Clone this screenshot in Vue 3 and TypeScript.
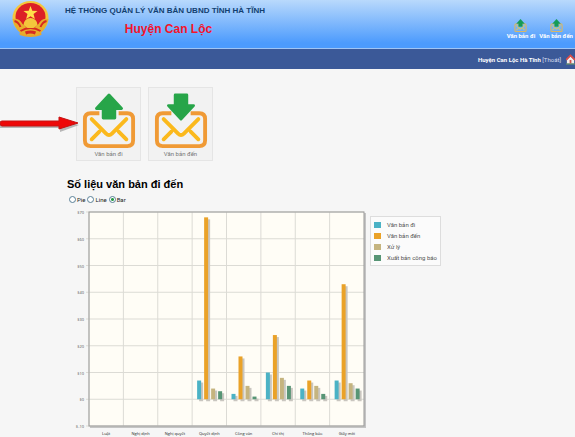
<script setup lang="ts">
import { ref } from 'vue'

interface Series {
  name: string
  color: string
}

interface Category {
  name: string
  values: number[]
}

const series: Series[] = [
  { name: 'Văn bản đi', color: '#4bb2c5' },
  { name: 'Văn bản đến', color: '#eaa228' },
  { name: 'Xử lý', color: '#c5b47f' },
  { name: 'Xuất bản công báo', color: '#579575' },
]

const categories: Category[] = [
  { name: 'Luật', values: [] },
  { name: 'Nghị định', values: [] },
  { name: 'Nghị quyết', values: [] },
  { name: 'Quyết định', values: [7, 68, 4, 3] },
  { name: 'Công văn', values: [2, 16, 5, 1] },
  { name: 'Chỉ thị', values: [10, 24, 8, 5] },
  { name: 'Thông báo', values: [4, 7, 5, 2] },
  { name: 'Giấy mời', values: [7, 43, 6, 4] },
]

const ticks: number[] = [70, 60, 50, 40, 30, 20, 10, 0, -10]
const chartTypes: string[] = ['Pie', 'Line', 'Bar']
const chartType = ref<string>('Bar')

const plot = { left: 22, top: 6, width: 275, height: 214 }
const columnWidth = plot.width / categories.length

const yOf = (value: number): number => plot.top + ((70 - value) / 80) * plot.height
const xOf = (column: number): number => plot.left + column * columnWidth
const barX = (column: number, index: number): number => xOf(column) + 5 + index * 7
const barHeight = (value: number): number => yOf(0) - yOf(value)

const shortcuts = [
  { label: 'Văn bản đi', down: false },
  { label: 'Văn bản đến', down: true },
]
</script>

<template>
  <div class="page">
    <header class="banner">
      <svg class="emblem" viewBox="1 0 36 36" aria-hidden="true">
        <path d="M9 27 L8 34 Q19 38 30 34 L29 27Z" fill="#e9a52c" />
        <ellipse cx="19" cy="17" rx="18" ry="17" fill="#f4c63c" />
        <ellipse cx="19" cy="16" rx="15" ry="14" fill="#dc1f26" />
        <path d="M19 5 L20.8 9.8 L26 10 L22 13 L23.4 18 L19 15.2 L14.6 18 L16 13 L12 10 L17.2 9.8Z" fill="#ffe04a" />
        <path d="M1 18 Q8 17 11 23 L16 27 L22 27 L27 23 Q30 17 37 18 Q34 31 25 34 H13 Q4 31 1 18Z" fill="#e8ae2c" />
        <path d="M3 20 Q7 21 9 26 M35 20 Q31 21 29 26 M9 30 Q19 24 29 30" fill="none" stroke="#d72b20" stroke-width="2" />
        <path d="M12 24 A7 7 0 0 1 26 24 L22 27 H16Z" fill="#f4c63c" />
        <path d="M14 32 Q19 30 24 32" fill="none" stroke="#d72b20" stroke-width="3" />
      </svg>
      <div class="titles">
        <p class="system">HỆ THỐNG QUẢN LÝ VĂN BẢN UBND TỈNH HÀ TĨNH</p>
        <h1>Huyện Can Lộc</h1>
      </div>
      <nav class="quick">
        <a v-for="item in shortcuts" :key="item.label" href="#">
          <svg viewBox="0 0 56 58" aria-hidden="true">
            <rect x="3" y="22" width="50" height="34" rx="6" fill="none" stroke="#d8b767" stroke-width="5" />
            <path d="M10 28 L25 43 Q28 46 31 43 L46 28 M10 50 L18 42 M46 50 L38 42" fill="none" stroke="#d7c66a" stroke-width="5" />
            <path d="M28 1 L45 20 H36 V34 H20 V20 H11Z" fill="#159b56" stroke="#159b56" stroke-width="2" />
          </svg>
          <span>{{ item.label }}</span>
        </a>
      </nav>
    </header>

    <div class="userbar">
      <span><strong>Huyện Can Lộc Hà Tĩnh</strong> <a href="#">[Thoát]</a></span>
      <a href="#" class="home" aria-label="Trang chủ">
        <svg viewBox="0 0 10 11" aria-hidden="true">
          <path d="M1 6 L5 2 L9 6 V10 H1Z" fill="#f3eeee" />
          <path d="M0 6 L5 1 L10 6" fill="none" stroke="#e04c45" stroke-width="2" />
          <rect x="4" y="6" width="2" height="4" fill="#d2504b" />
          <path d="M0 10.5 H10" stroke="#76a45c" />
        </svg>
      </a>
    </div>

    <main>
      <section class="launcher">
        <svg class="pointer" viewBox="0 0 80 18" aria-hidden="true">
          <path d="M0 8 H60 V5 L79 10 L60 17 V13 H0Z" fill="#777" opacity="0.5" />
          <path d="M2 6 H59 V2 L78 8 L59 14 V11 H2 Q0 11 0 8 Q0 6 2 6Z" fill="#ee0808" stroke="#c51212" />
        </svg>
        <a v-for="item in shortcuts" :key="item.label" href="#" class="tile">
          <svg viewBox="0 0 56 60" aria-hidden="true">
            <path d="M18 22 H9 Q3 22 3 28 V50 Q3 56 9 56 H47 Q53 56 53 50 V28 Q53 22 47 22 H38" fill="none" stroke="#f09a35" stroke-width="4" />
            <path d="M10 28 L25 43 Q28 46 31 43 L46 28 M10 49 L18 41 M46 49 L38 41" fill="none" stroke="#fbb91c" stroke-width="4" stroke-linecap="round" />
            <path v-if="item.down" d="M22 3 H34 V14 H41 L28 28 L15 14 H22Z" fill="#27a549" stroke="#27a549" stroke-width="3" stroke-linejoin="round" />
            <path v-else d="M28 3 L41 17 H34 V27 H22 V17 H15Z" fill="#27a549" stroke="#27a549" stroke-width="3" stroke-linejoin="round" />
          </svg>
          <span>{{ item.label }}</span>
        </a>
      </section>

      <section class="stats">
        <h2>Số liệu văn bản đi đến</h2>
        <div class="types">
          <label v-for="type in chartTypes" :key="type">
            <input v-model="chartType" type="radio" name="chart" :value="type" />{{ type }}
          </label>
        </div>
        <div class="chart-row">
          <svg class="chart" width="303" height="231" viewBox="0 0 303 231" role="img" aria-label="Số liệu văn bản đi đến">
            <rect :x="plot.left + 1" :y="plot.top + 1" :width="plot.width + 1" :height="plot.height + 1" fill="#c4c4c4" />
            <rect :x="plot.left" :y="plot.top" :width="plot.width" :height="plot.height" fill="#fffdf6" />
            <g v-for="tick in ticks" :key="tick">
              <line :x1="plot.left - 3" :x2="plot.left + plot.width" :y1="yOf(tick)" :y2="yOf(tick)" stroke="#dcdbd5" />
              <text class="tick" :x="plot.left - 5" :y="yOf(tick) + 2" text-anchor="end">{{ tick < 0 ? '$-' + -tick : '$' + tick }}</text>
            </g>
            <g v-for="(category, column) in categories" :key="category.name">
              <line :x1="xOf(column)" :x2="xOf(column)" :y1="plot.top" :y2="plot.top + plot.height" stroke="#dcdbd5" />
              <g v-for="(value, index) in category.values" :key="index">
                <rect :x="barX(column, index) + 2" :y="yOf(value) + 2" width="4" :height="barHeight(value)" fill="#c9c6c0" />
                <rect :x="barX(column, index)" :y="yOf(value)" width="4" :height="barHeight(value)" :fill="series[index].color" />
              </g>
              <text class="tick category" :x="xOf(column) + columnWidth / 2" :y="plot.top + plot.height + 9" text-anchor="middle">{{ category.name }}</text>
            </g>
            <rect :x="plot.left" :y="plot.top" :width="plot.width" :height="plot.height" fill="none" stroke="#999" />
          </svg>
          <ul class="legend">
            <li v-for="item in series" :key="item.name">
              <i :style="{ backgroundColor: item.color }"></i>{{ item.name }}
            </li>
          </ul>
        </div>
      </section>
    </main>
  </div>
</template>

<style>
body {
  background: #f6f6f6;
}
</style>

<style scoped>
.page {
  font-family: Roboto, "Noto Sans", sans-serif;
  color: #222;
}
a {
  color: inherit;
  text-decoration: none;
}
h1, h2, p, ul {
  margin: 0;
  padding: 0;
}
.banner {
  display: flex;
  height: 48px;
  padding-left: 12px;
  background: linear-gradient(#b9d9fc, #4c9bfd 90%);
  border-bottom: 1px solid #9fc5f5;
}
.emblem {
  width: 37px;
  height: 36px;
  padding-top: 1px;
}
.titles {
  min-width: 207px;
  margin-left: 16px;
  padding-top: 5px;
  font-family: "Liberation Sans", Arial, sans-serif;
  font-weight: bold;
}
.system {
  font-size: 8px;
  line-height: 12px;
  color: #123f70;
}
h1 {
  font-size: 12px;
  line-height: 24px;
  text-align: center;
  color: #f5142a;
}
.quick {
  display: flex;
  gap: 4px;
  margin-left: auto;
  padding: 19px 2px 0 0;
}
.quick a {
  display: flex;
  flex-direction: column;
  align-items: center;
  font-size: 6px;
  line-height: 7px;
  font-weight: bold;
  color: #fff;
}
.quick svg {
  width: 13px;
  height: 13px;
}
.userbar {
  display: flex;
  align-items: center;
  justify-content: flex-end;
  gap: 5px;
  height: 20px;
  background: #3b5998;
  color: #fff;
  font-size: 6px;
}
.userbar a {
  color: #d5deef;
}
.home {
  display: flex;
}
.home svg {
  width: 9px;
  height: 11px;
}
.launcher {
  display: flex;
  align-items: flex-start;
  padding-top: 18px;
}
.pointer {
  width: 80px;
  height: 18px;
  margin: 28px -4px 0 0;
  z-index: 1;
}
.tile {
  display: flex;
  flex-direction: column;
  align-items: center;
  width: 63px;
  margin-right: 7px;
  padding: 4px 0 3px;
  border: 1px solid #e5e5e5;
  background: #f2f2f2;
  font-size: 6px;
  line-height: 7px;
  color: #777;
}
.tile svg {
  width: 54px;
  height: 58px;
}
.stats {
  padding: 14px 0 0 67px;
}
h2 {
  font-family: "Liberation Sans", Arial, sans-serif;
  font-size: 11px;
  line-height: 18px;
  font-weight: bold;
  color: #000;
}
.types {
  display: flex;
  gap: 2px;
  height: 13px;
  padding-left: 2px;
  font-size: 6px;
}
.types label {
  display: flex;
  align-items: center;
  gap: 1px;
}
.types input {
  appearance: none;
  width: 7px;
  height: 7px;
  margin: 0;
  border: 1px solid #598097;
  border-radius: 50%;
  background: #fff;
}
.types input:checked {
  background: radial-gradient(circle, #299a48 1px, #fff 2px);
}
.chart-row {
  display: flex;
  align-items: flex-start;
}
.chart {
  flex: none;
}
.tick {
  font-family: "Open Sans", "Noto Sans", sans-serif;
  font-size: 4px;
  fill: #555;
}
.category {
  fill: #222;
}
.legend {
  display: flex;
  flex-direction: column;
  margin-top: 10px;
  padding: 2px 3px;
  border: 1px solid #ddd;
  background: #fbfbfb;
  list-style: none;
  font-size: 6px;
  line-height: 11px;
  color: #555;
}
.legend li {
  display: flex;
  align-items: center;
  gap: 6px;
  white-space: nowrap;
}
.legend i {
  width: 7px;
  height: 6px;
}
</style>
